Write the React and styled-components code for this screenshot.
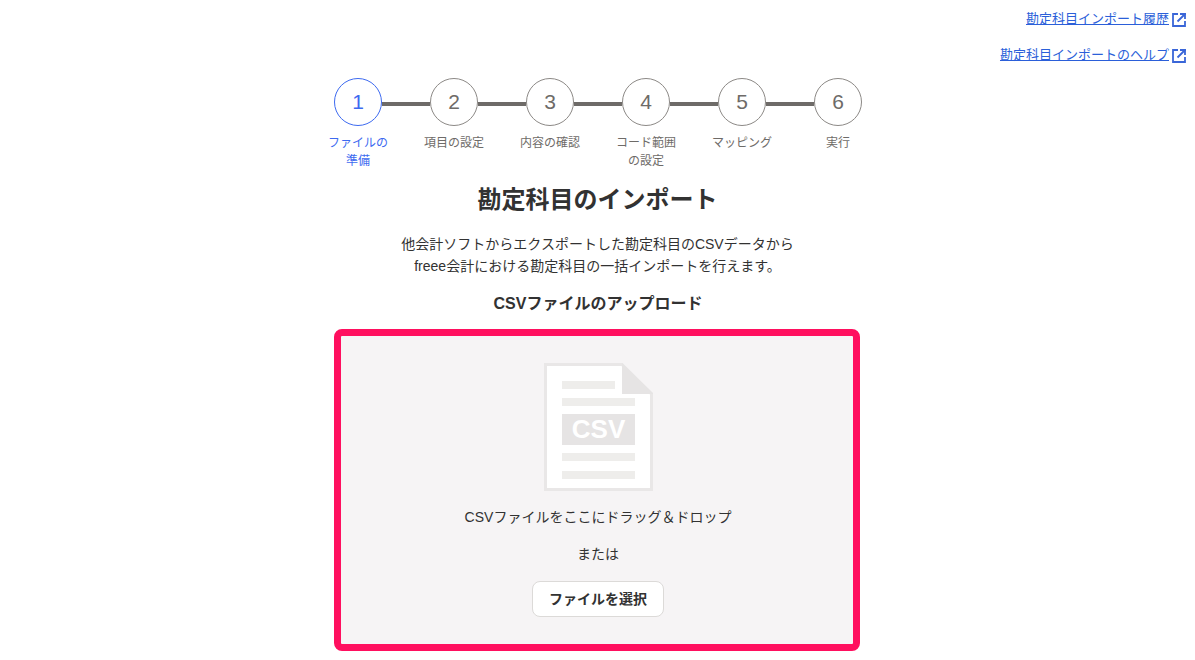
import React from "react";
import styled, { createGlobalStyle } from "styled-components";

const Global = createGlobalStyle`
  html, body { margin: 0; padding: 0; background: #fff; }
  body { font-family: "Liberation Sans", "Noto Sans CJK JP", sans-serif; color: #323232; overflow: hidden; }
`;
const Page = styled.div`
  width: 1195px; height: 660px; overflow: hidden;
  display: flex; flex-direction: column; align-items: center;
`;
const HelpLinks = styled.div`
  align-self: stretch; display: flex; flex-direction: column; align-items: flex-end;
  gap: 18px; padding: 10px 9px 0 0; height: 69px; box-sizing: border-box;
`;
const HelpLink = styled.a`
  display: flex; align-items: center; gap: 3px; font-size: 13px; line-height: 18px;
  text-decoration: underline; color: #2b5fd9;
  svg { display: block; margin-top: 2px; }
`;
const Stepper = styled.ol`
  list-style: none; margin: 0 0 0 1px; padding: 0; display: flex; width: 576px;
`;
const Step = styled.li`
  position: relative; width: 96px; display: flex; flex-direction: column; align-items: center;
  padding-top: 9px;
  &:not(:last-child)::after {
    content: ""; position: absolute; left: 72px; width: 48px; top: 33px; height: 4px; background: #6e6b68;
  }
`;
const Circle = styled.div`
  width: 48px; height: 48px; box-sizing: border-box; border-radius: 50%;
  border: 1px solid ${p => (p.$active ? "#3d6af0" : "#8c8986")};
  color: ${p => (p.$active ? "#3d6af0" : "#6e6b68")};
  font-family: "Liberation Sans", sans-serif; font-size: 21px;
  display: flex; align-items: center; justify-content: center;
`;
const StepLabel = styled.div`
  margin-top: 8px; width: 62px; text-align: center; font-size: 12px; line-height: 18px;
  color: ${p => (p.$active ? "#3d6af0" : "#6e6b68")};
`;
const Title = styled.h1`
  margin: 12px 0 0; font-size: 24px; line-height: 36px; font-weight: 700; color: #323232;
`;
const Lead = styled.p`
  margin: 15px 0 0; font-size: 14px; line-height: 22px; text-align: center; color: #323232;
`;
const SubTitle = styled.h2`
  margin: 15px 0 0 1px; font-size: 16px; line-height: 24px; font-weight: 700; color: #323232;
`;
const Drop = styled.div`
  margin: 13px 1px 0 0; width: 526px; height: 322px; flex: none; box-sizing: border-box;
  border: 7px solid #ff0f5f; border-radius: 8px; background: #f6f4f5;
  display: flex; flex-direction: column; align-items: center; padding: 27px 0 0 2px;
`;
const DropText = styled.p`
  margin: ${p => p.$mt}px 0 0; font-size: 14px; line-height: 21px; color: #323232;
`;
const Button = styled.button`
  margin-top: 16px; height: 36px; width: 132px; box-sizing: border-box; padding: 0 0 2px;
  background: #fff; border: 1px solid #dcdad8; border-radius: 8px;
  font-family: inherit; font-size: 14px; font-weight: 700; color: #323232;
`;

const External = () => (
  <svg width="14" height="14" viewBox="0 0 14 14" fill="none" stroke="#3a66d8" strokeWidth="1.8">
    <path d="M6 1H1V13H13V8" />
    <path d="M14 1H8M13 0V6M13 1L5.5 8.5" />
  </svg>
);

const FileIcon = () => (
  <svg width="112" height="130" viewBox="0 0 112 130" style={{ display: "block" }}>
    <path d="M3.5 1.5H80L109.5 31V126.5H3.5Z" fill="#fff" stroke="#e9e7e7" strokeWidth="3" />
    <path d="M80 0L111 30V31H80Z" fill="#e6e4e4" />
    <rect x="20" y="18" width="53" height="8" fill="#eeedeb" />
    <rect x="20" y="35" width="73" height="8" fill="#eeedeb" />
    <rect x="20" y="51" width="73" height="31" fill="#e6e4e4" />
    <text x="56.5" y="75" textAnchor="middle" fontFamily="Liberation Sans" fontWeight="700" fontSize="26" fill="#fff">CSV</text>
    <rect x="20" y="90" width="73" height="8" fill="#eeedeb" />
    <rect x="20" y="108" width="73" height="8" fill="#eeedeb" />
  </svg>
);

const steps = ["ファイルの準備", "項目の設定", "内容の確認", "コード範囲の設定", "マッピング", "実行"];

export default function App() {
  return (
    <Page>
      <Global />
      <HelpLinks>
        <HelpLink href="#">勘定科目インポート履歴<External /></HelpLink>
        <HelpLink href="#">勘定科目インポートのヘルプ<External /></HelpLink>
      </HelpLinks>
      <Stepper>
        {steps.map((s, i) => (
          <Step key={s}>
            <Circle $active={i === 0}>{i + 1}</Circle>
            <StepLabel $active={i === 0}>{s}</StepLabel>
          </Step>
        ))}
      </Stepper>
      <Title>勘定科目のインポート</Title>
      <Lead>他会計ソフトからエクスポートした勘定科目のCSVデータから<br />freee会計における勘定科目の一括インポートを行えます。</Lead>
      <SubTitle>CSVファイルのアップロード</SubTitle>
      <Drop>
        <FileIcon />
        <DropText $mt={14}>CSVファイルをここにドラッグ＆ドロップ</DropText>
        <DropText $mt={16}>または</DropText>
        <Button>ファイルを選択</Button>
      </Drop>
    </Page>
  );
}
